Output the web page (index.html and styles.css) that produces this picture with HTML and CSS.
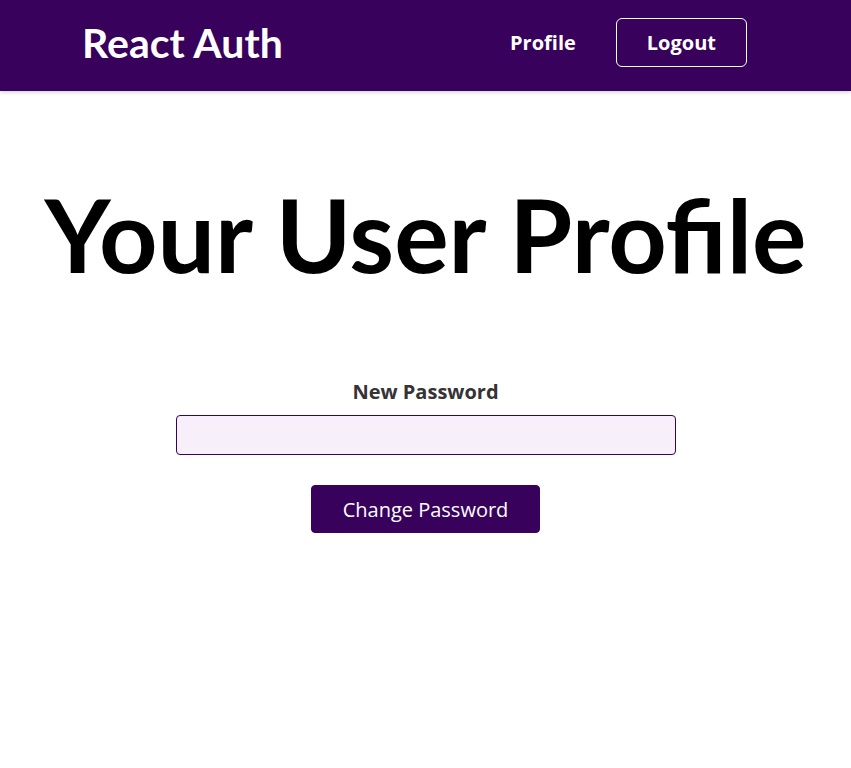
FILE: index.html
```
<!DOCTYPE html>
<html lang="en">
<head>
<meta charset="utf-8">
<title>React Auth</title>
<link rel="stylesheet" href="styles.css">
</head>
<body>
<header class="header">
  <div class="logo">React Auth</div>
  <nav>
    <ul class="nav-list">
      <li><a href="#" class="nav-link">Profile</a></li>
      <li><button class="logout">Logout</button></li>
    </ul>
  </nav>
</header>
<main>
  <section class="profile">
    <h1 class="title">Your User Profile</h1>
    <form class="form">
      <div class="control">
        <label for="new-password">New Password</label>
        <input type="password" id="new-password">
      </div>
      <div class="action">
        <button type="button">Change Password</button>
      </div>
    </form>
  </section>
</main>
</body>
</html>
```
FILE: styles.css
```
* { box-sizing: border-box; }
html { font-size: 20px; }
body {
  margin: 0;
  font-family: "Open Sans", "Noto Sans", sans-serif;
  background: #fff;
}
.header {
  width: 100%;
  height: 91px;
  background-color: #38015c;
  box-shadow: 0 1px 4px rgba(0, 0, 0, 0.2);
  display: flex;
  justify-content: space-between;
  align-items: center;
  padding: 0 84px 7px 82px;
}
.logo {
  font-family: Lato, sans-serif;
  font-size: 41px;
  color: #fff;
  font-weight: bold;
  margin: 0;
}
.nav-list {
  list-style: none;
  margin: 0;
  padding: 0;
  display: flex;
  align-items: baseline;
}
.nav-list li { margin: 0 1rem; }
.nav-link {
  text-decoration: none;
  color: #fff;
  font-weight: bold;
}
.logout {
  font: inherit;
  background-color: transparent;
  border: 1px solid #fff;
  padding: 0.5rem 30px;
  border-radius: 6px;
  color: #fff;
  font-weight: bold;
}
.profile {
  text-align: center;
}
.title {
  font-family: Lato, sans-serif;
  font-size: 102px;
  font-weight: bold;
  margin: 81px 0 83px;
  color: #000;
}
.form {
  width: 95%;
  max-width: 25rem;
  margin: 0 auto;
}
.control { margin-bottom: 0.5rem; }
.control label {
  display: block;
  font-weight: bold;
  margin-bottom: 0.5rem;
  color: #353336;
}
.control input {
  display: block;
  font: inherit;
  width: 100%;
  height: 40px;
  border-radius: 4px;
  border: 1px solid #38015c;
  padding: 0.25rem;
  background-color: #f7f0fa;
}
.action { margin-top: 1.5rem; }
.action button {
  font: inherit;
  height: 48px;
  padding: 0 31px;
  border-radius: 4px;
  background-color: #38015c;
  color: #fff;
  border: 1px solid #38015c;
}
```
